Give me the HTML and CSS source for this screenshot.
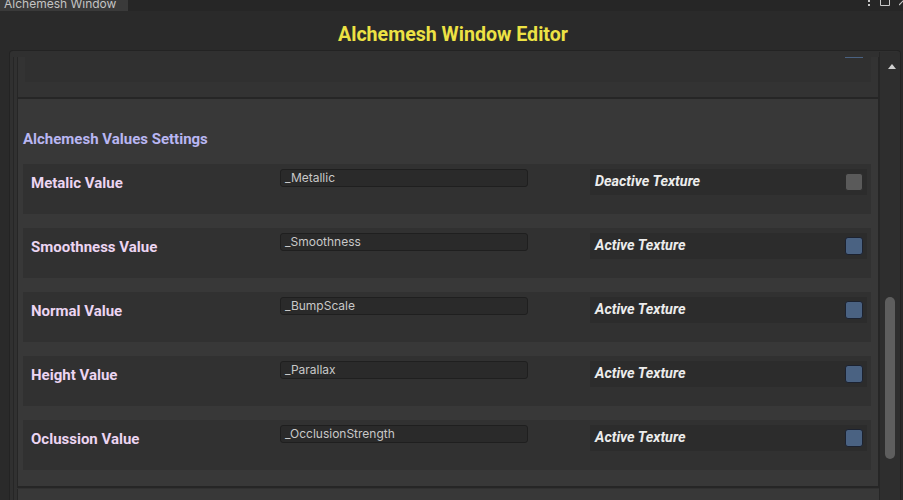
FILE: index.html
```html
<!DOCTYPE html>
<html>
<head>
<meta charset="utf-8">
<link rel="stylesheet" href="styles.css">
</head>
<body>
<div class="tabbar">
  <div class="tab"><span>Alchemesh Window</span></div>
  <div class="tabicons">
    <svg width="4" height="6" viewBox="0 0 4 6"><rect x="1" y="0" width="2" height="2" fill="#c8c8c8"/><rect x="1" y="4" width="2" height="2" fill="#c8c8c8"/></svg>
    <svg width="10" height="6" viewBox="0 0 10 6"><path d="M0.5 0 V5.5 H9.5 V0" fill="none" stroke="#c8c8c8" stroke-width="1"/></svg>
    <svg width="5" height="6" viewBox="0 0 5 6"><path d="M0 5 L5 0" stroke="#c8c8c8" stroke-width="1.2"/></svg>
  </div>
</div>
<div class="window">
  <div class="header"><h1 class="title">Alchemesh Window Editor</h1></div>
  <div class="panel">
    <div class="content">
      <div class="viewport">
        <div class="section-top">
          <div class="toprow"><div class="topcheck"></div></div>
        </div>
        <div class="section">
          <div class="section-title">Alchemesh Values Settings</div>
          <div class="rows">
            <div class="row">
              <div class="label">Metalic Value</div>
              <div class="field">_Metallic</div>
              <div class="toggle"><span class="ttext">Deactive Texture</span><span class="check off"></span></div>
            </div>
            <div class="row">
              <div class="label">Smoothness Value</div>
              <div class="field">_Smoothness</div>
              <div class="toggle"><span class="ttext">Active Texture</span><span class="check on"></span></div>
            </div>
            <div class="row">
              <div class="label">Normal Value</div>
              <div class="field">_BumpScale</div>
              <div class="toggle"><span class="ttext">Active Texture</span><span class="check on"></span></div>
            </div>
            <div class="row">
              <div class="label">Height Value</div>
              <div class="field">_Parallax</div>
              <div class="toggle"><span class="ttext">Active Texture</span><span class="check on"></span></div>
            </div>
            <div class="row">
              <div class="label">Oclussion Value</div>
              <div class="field">_OcclusionStrength</div>
              <div class="toggle"><span class="ttext">Active Texture</span><span class="check on"></span></div>
            </div>
          </div>
        </div>
        <div class="section-next"></div>
      </div>
    </div>
    <div class="scrollbar">
      <svg class="arrow" width="8" height="5" viewBox="0 0 8 5"><path d="M0 5 L4 0 L8 5 Z" fill="#d0d0d0"/></svg>
      <div class="thumb"></div>
    </div>
  </div>
</div>
</body>
</html>
```

FILE: styles.css
```css
html, body {
  margin: 0;
  padding: 0;
  width: 903px;
  height: 500px;
  overflow: hidden;
  background: #262626;
}

.tabbar {
  height: 11px;
  display: flex;
  justify-content: space-between;
  background: #262626;
  overflow: hidden;
}

.tab {
  width: 128px;
  height: 11px;
  background: #3a3a3a;
  overflow: hidden;
}

.tab span {
  display: block;
  margin-top: -4px;
  padding-left: 4px;
  font: 12px/15px "Inter", "Roboto", sans-serif;
  color: #c4c4c4;
  white-space: nowrap;
}

.tabicons {
  display: flex;
  align-items: flex-start;
  gap: 9px;
  margin-right: -1px;
}

.tabicons svg {
  display: block;
}

.window {
  height: 489px;
  background: #2a2a2a;
  display: flex;
  flex-direction: column;
}

.header {
  height: 39px;
  box-sizing: border-box;
  padding-top: 12px;
  display: flex;
  align-items: flex-start;
  justify-content: center;
}

.title {
  margin: 0;
  padding-left: 3px;
  font: bold 19.6px/24px "Roboto", sans-serif;
  color: #ede244;
}

.panel {
  flex: 1;
  margin: 0 2px 0 9px;
  border: 1px solid #232323;
  border-bottom: none;
  border-radius: 4px 4px 0 0;
  background: #303030;
  display: flex;
  padding-top: 1px;
  overflow: hidden;
}

.content {
  flex: 1;
  padding: 5px 0 0 3px;
  overflow: hidden;
}

.viewport {
  height: 100%;
  border-left: 1px solid #262626;
  padding-left: 3px;
  background: #313131;
}

.section-top {
  height: 40px;
  border-left: 1px solid #262626;
  border-right: 1px solid #262626;
  border-bottom: 2px solid #262626;
  background: #333333;
  padding: 0 7px 0 7px;
}

.toprow {
  height: 25px;
  background: #303030;
  position: relative;
}

.topcheck {
  position: absolute;
  right: 8px;
  top: 0;
  width: 18px;
  height: 1px;
  background: #4a6282;
}

.section {
  border-left: 1px solid #262626;
  border-right: 1px solid #262626;
  border-bottom: 2px solid #262626;
  background: #383838;
  padding: 32px 7px 16px 5px;
}

.section-title {
  font: bold 15px/17px "Roboto", sans-serif;
  color: #b9b6f2;
  margin-bottom: 16px;
}

.rows {
  display: flex;
  flex-direction: column;
  gap: 14px;
}

.row {
  height: 50px;
  background: #313131;
  display: flex;
  align-items: flex-start;
  padding-right: 4px;
}

.label {
  width: 249px;
  flex: none;
  padding-left: 8px;
  margin-top: 11px;
  font: bold 15px/17px "Roboto", sans-serif;
  color: #ecd5f2;
  white-space: nowrap;
}

.field {
  flex: none;
  width: 242px;
  margin-top: 5px;
  height: 16px;
  border: 1px solid #1f1f1f;
  border-radius: 3px;
  background: #2a2a2a;
  padding-left: 4px;
  font: 12px/15px "Inter", "Roboto", sans-serif;
  color: #c8c8c8;
}

.toggle {
  flex: 1;
  margin-left: 62px;
  margin-top: 5px;
  height: 26px;
  background: #2c2c2c;
  display: flex;
  align-items: center;
  justify-content: space-between;
  padding: 0 4px 0 5px;
}

.ttext {
  font: italic bold 14.4px/17px "Roboto", sans-serif;
  color: #ececec;
  margin-top: -2px;
}

.check {
  width: 16px;
  height: 16px;
  border-radius: 3px;
  border: 1px solid #232323;
}

.check.off {
  background: #5a5a5a;
  border-color: #2c2c2c;
}

.check.on {
  background: #4a6282;
  border-color: #1c2230;
}

.section-next {
  height: 20px;
  margin-top: 1px;
  border-left: 1px solid #262626;
  background: #383838;
}

.scrollbar {
  width: 20px;
  border-left: 1px solid #262626;
  background: #2e2e2e;
  position: relative;
}

.arrow {
  position: absolute;
  left: 8px;
  top: 12px;
}

.thumb {
  position: absolute;
  left: 5px;
  top: 245px;
  width: 10px;
  height: 162px;
  border-radius: 5px;
  background: #5e5e5e;
}
```
